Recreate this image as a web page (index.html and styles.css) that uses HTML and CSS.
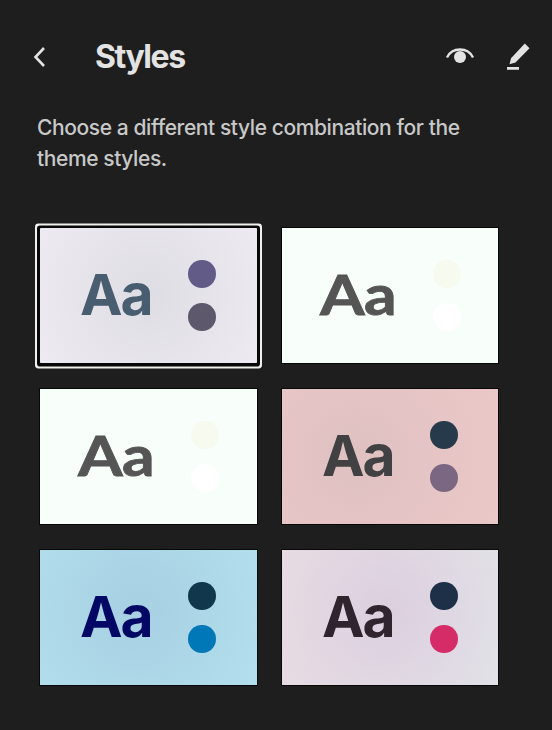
FILE: index.html
```html
<!DOCTYPE html>
<html lang="en">
<head>
<meta charset="utf-8">
<title>Styles</title>
<link rel="stylesheet" href="styles.css">
</head>
<body>
<main class="panel">
  <header class="header">
    <svg class="back" width="16" height="24" viewBox="0 0 16 24"><path d="M13 3 4.500 12l8.500 9" fill="none" stroke="currentColor" stroke-width="2.600"/></svg>
    <h1 class="title">Styles</h1>
    <svg class="eye" width="30" height="20" viewBox="0 0 30 20"><path d="M2 10.500C4.500 5.200 9 2.500 15 2.500s10.500 2.700 13 8" fill="none" stroke="currentColor" stroke-width="2.300"/><circle cx="15" cy="10" r="6" fill="currentColor"/></svg>
    <svg class="pen" width="26" height="30" viewBox="0 0 26 30"><path d="M19.800 1.500 24.500 6.300 10.500 20.600 4.500 22.300 6 16.200ZM2 25h12v2.800H2z" fill="currentColor"/></svg>
  </header>
  <p class="description">Choose a different style combination for the<br>theme styles.</p>
  <section class="grid">
    <div class="card lavender selected"><span class="sample">Aa</span><div class="dots"><i></i><i></i></div></div>
    <div class="card mint"><span class="sample">Aa</span><div class="dots"><i></i><i></i></div></div>
    <div class="card mint"><span class="sample">Aa</span><div class="dots"><i></i><i></i></div></div>
    <div class="card rose"><span class="sample">Aa</span><div class="dots"><i></i><i></i></div></div>
    <div class="card sky"><span class="sample">Aa</span><div class="dots"><i></i><i></i></div></div>
    <div class="card blush"><span class="sample">Aa</span><div class="dots"><i></i><i></i></div></div>
  </section>
</main>
</body>
</html>
```
FILE: styles.css
```css
* { box-sizing: border-box; }
body { margin: 0; background: #1e1e1e; color: #e3e3e3; font-family: Inter, sans-serif; }
.panel { height: 730px; padding-top: 37px; overflow: hidden; }
.header { display: flex; align-items: center; height: 40px; padding-left: 31px; }
.title { width: 352px; margin: 0 0 0 47px; padding-left: 1px; font-size: 32px; line-height: 40px; font-weight: 700; letter-spacing: -1.45px; }
.eye { margin-left: -1px; }
.pen { margin-left: 30px; }
.description { margin: 35px 0 0 37px; color: #c8c8c8; font-size: 21px; line-height: 31px; font-weight: 450; letter-spacing: -0.41px; white-space: nowrap; }
.grid { display: grid; grid-template-columns: 217px 216px; grid-auto-rows: 135px; gap: 26px 25px; margin: 54px 0 0 40px; }
.card { display: flex; align-items: center; padding-left: 40px; box-shadow: 0 0 0 1px #080808; }
.sample { width: 108px; font-size: 57px; line-height: 70px; font-weight: 700; letter-spacing: -2px; margin-top: -1px; }
.dots { display: flex; flex-direction: column; gap: 14.500px; }
.dots i { width: 28px; height: 28.500px; border-radius: 50%; background: var(--first); }
.dots i + i { background: var(--second); }
.lavender { --first: #625b88; --second: #5d586b; color: #485d70; background: radial-gradient(circle at 50% 50%, #dfdde4, #eeebf2 135px); }
.selected { box-shadow: 0 .5px 0 3px #080808, 0 .5px 0 5px #f0f0f0; border-radius: 1px; }
.mint { --first: #f6faef; --second: #fefffe; color: #555; background: #f8fffa; padding-left: 38px; }
.mint .sample { width: 113px; margin-top: -3px; font-size: 55px; font-family: Lato, sans-serif; letter-spacing: -.5px; -webkit-text-stroke: .8px currentColor; transform: scaleX(1.17); transform-origin: left center; }
.rose { --first: #263a4c; --second: #7c6782; color: #414042; background: radial-gradient(circle at 34% 50%, #dfc1c2, #ecc8c8 165px); }
.sky { --first: #10374b; --second: #0077b6; color: #030864; background: radial-gradient(circle at 45% 45%, #a7d0e2, #b3e0ee 150px); }
.blush { --first: #1d3048; --second: #d52c67; color: #30242f; background: radial-gradient(circle at 48% 45%, rgba(218,205,222,.9), rgba(218,205,222,0) 140px), linear-gradient(100deg, #eadde3, #e1e3e8); }
```
